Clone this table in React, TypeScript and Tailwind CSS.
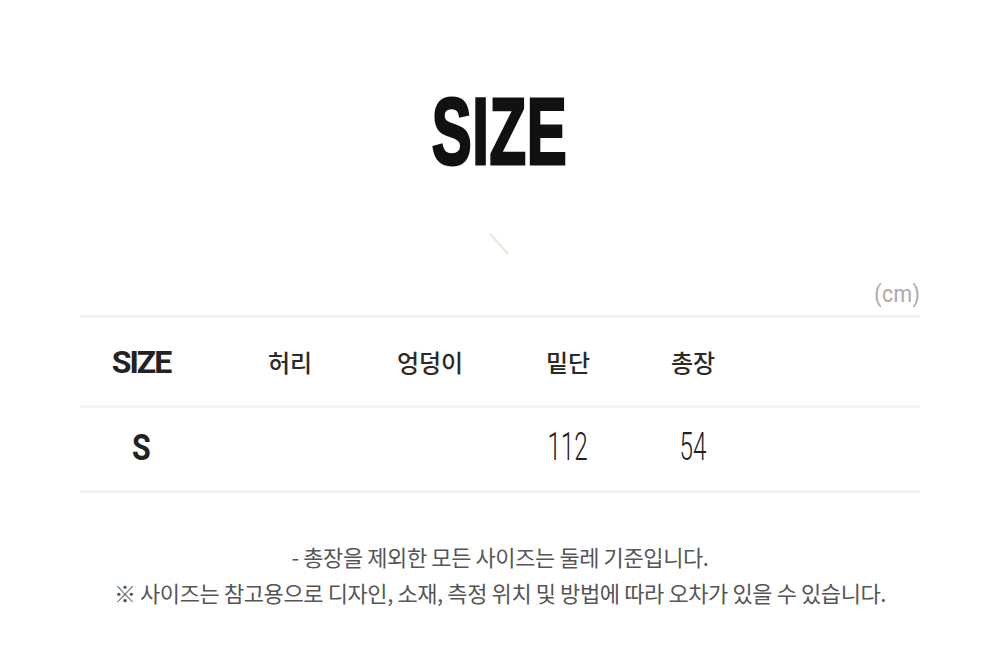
import React from 'react';

const cols = ['w-[122px]', 'w-[176px]', 'w-[104px]', 'w-[172px]', 'w-[78px]'];

const heads = ['허리', '엉덩이', '밑단', '총장'];
const row = ['', '', '112', '54'];

export default function App() {
    return (
        <div className="w-[1000px] h-[665px] bg-white flex flex-col items-center font-['Noto_Sans_CJK_KR',sans-serif]">
            <div className="mt-[81px] h-[100px] flex items-center justify-center">
                <h1 className="font-['Liberation_Sans',sans-serif] font-bold text-[95px] leading-none text-[#111] scale-x-[0.63] tracking-[1px] [-webkit-text-stroke:3px_#111]">
                    SIZE
                </h1>
            </div>

            <svg className="mt-[51px]" width="24" height="26" viewBox="0 0 24 26">
                <line x1="2" y1="2" x2="20" y2="22" stroke="#ebe7d3" strokeWidth="2" />
            </svg>

            <div className="w-[840px] mt-[23px]">
                <div className="flex justify-end h-[34px]">
                    <span className="font-['Roboto',sans-serif] text-[24px] leading-[26px] text-[#aaa] tracking-[0.5px] scale-x-[0.88] origin-right">
                        (cm)
                    </span>
                </div>
                <div className="border-t-[3px] border-[#f3f3f3]" />
                <div className="flex h-[87px] items-center">
                    <div className={`${cols[0]} text-center font-['Roboto',sans-serif] font-bold text-[32px] text-[#222] tracking-[-2px]`}>SIZE</div>
                    {heads.map((h, i) => (
                        <div key={h} className={`${cols[i + 1]} text-center text-[24px] font-medium text-[#2a2a2a]`}>
                            {h}
                        </div>
                    ))}
                </div>
                <div className="border-t-[3px] border-[#f3f3f3]" />
                <div className="flex h-[82px] items-center pb-[4px]">
                    <div className={`${cols[0]} text-center`}>
                        <span className="inline-block font-['Roboto',sans-serif] font-bold text-[37px] leading-none text-[#222] scale-x-[0.82]">S</span>
                    </div>
                    {row.map((v, i) => (
                        <div key={i} className={`${cols[i + 1]} text-center`}>
                            <span className="inline-block font-['Roboto',sans-serif] font-light text-[38px] leading-none text-[#222] scale-x-[0.64]">
                                {v}
                            </span>
                        </div>
                    ))}
                </div>
                <div className="border-t-[3px] border-[#f3f3f3]" />
            </div>

            <div className="mt-[45px] text-center text-[22px] leading-[36px] text-[#555] tracking-[-0.4px] font-normal">
                <p>- 총장을 제외한 모든 사이즈는 둘레 기준입니다.</p>
                <p>※ 사이즈는 참고용으로 디자인, 소재, 측정 위치 및 방법에 따라 오차가 있을 수 있습니다.</p>
            </div>
        </div>
    );
}
